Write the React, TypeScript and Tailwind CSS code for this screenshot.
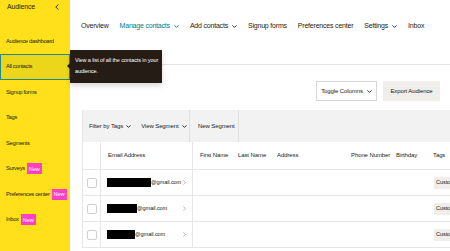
import React from "react";

const Caret = ({ className = "" }: { className?: string }) => (
  <svg width="5" height="3" viewBox="0 0 5 3" className={className}>
    <path d="M0.5 0.4 L2.5 2.4 L4.5 0.4" fill="none" stroke="currentColor" strokeWidth="0.9" />
  </svg>
);

const RightChev = () => (
  <svg width="3" height="5" viewBox="0 0 3 5" className="text-[#9a9a9a]">
    <path d="M0.4 0.4 L2.4 2.5 L0.4 4.6" fill="none" stroke="currentColor" strokeWidth="0.7" />
  </svg>
);

const NewBadge = () => (
  <span className="ml-[2px] inline-flex h-[11px] items-center bg-[#ff3fc6] px-[2px] text-[5.5px] tracking-normal text-white">New</span>
);

const sideItems: { label: string; active?: boolean; badge?: boolean }[] = [
  { label: "Audience dashboard" },
  { label: "All contacts", active: true },
  { label: "Signup forms" },
  { label: "Tags" },
  { label: "Segments" },
  { label: "Surveys", badge: true },
  { label: "Preferences center", badge: true },
  { label: "Inbox", badge: true },
];

const navItems: { label: string; caret?: boolean; active?: boolean }[] = [
  { label: "Overview" },
  { label: "Manage contacts", caret: true, active: true },
  { label: "Add contacts", caret: true },
  { label: "Signup forms" },
  { label: "Preferences center" },
  { label: "Settings", caret: true },
  { label: "Inbox" },
];

const rows = [44, 30, 28];

export default function App() {
  return (
    <div className="relative flex h-[251px] w-[450px] overflow-hidden bg-white font-['Liberation_Sans',Arial,sans-serif] text-[#241c15]">
      {/* Sidebar */}
      <aside className="flex w-[70px] shrink-0 flex-col bg-[#ffe01b]">
        <div className="flex h-[27.5px] items-start justify-between pl-[7px] pr-[11px] pt-[2px]">
          <span className="text-[7px] leading-[10px] tracking-[-0.15px]">Audience</span>
          <svg width="4" height="6" viewBox="0 0 4 6" className="mt-[2px]">
            <path d="M3.3 0.5 L0.8 3 L3.3 5.5" fill="none" stroke="#241c15" strokeWidth="0.9" />
          </svg>
        </div>
        <div className="h-[1px]" />
        {sideItems.map((it) =>
          it.active ? (
            <div
              key={it.label}
              className="flex h-[25.5px] items-center border border-[#1f8a88] bg-[#ecd61c] pl-[5px] text-[5.8px] tracking-[-0.3px] whitespace-nowrap"
            >
              {it.label}
            </div>
          ) : (
            <div key={it.label} className="flex h-[25.5px] items-center pl-[6px] text-[5.8px] tracking-[-0.3px] whitespace-nowrap">
              {it.label}
              {it.badge && <NewBadge />}
            </div>
          )
        )}
      </aside>

      {/* Main */}
      <main className="flex min-w-0 flex-1 flex-col overflow-hidden">
        <div className="h-[65px] shrink-0 border-b border-[#e4e4e4]">
          <nav className="flex h-[52px] items-center gap-[11px] pl-[11px] text-[7px] tracking-[-0.2px] whitespace-nowrap">
            {navItems.map((n) => (
              <span
                key={n.label}
                className={`flex items-center gap-[4px] ${n.active ? "text-[#007c89]" : "text-[#241c15]"}`}
              >
                {n.label}
                {n.caret && <Caret />}
              </span>
            ))}
          </nav>
        </div>

        <div className="mt-[16px] flex shrink-0 justify-end gap-[6px] pr-[10px] text-[6px] tracking-[-0.1px] whitespace-nowrap">
          <div className="flex h-[20px] w-[61px] items-center justify-center gap-[4px] border border-[#d6d6d6] bg-white">
            Toggle Columns
            <Caret />
          </div>
          <div className="flex h-[20px] w-[57px] items-center justify-center bg-[#efeeea]">Export Audience</div>
        </div>

        <div className="ml-[12px] mt-[9px] w-[420px] shrink-0 border-l border-[#e6e6e6] text-[6px] tracking-[-0.1px]">
          <div className="flex h-[32px] items-stretch bg-[#f2f2f2] whitespace-nowrap">
            <div className="flex w-[106px] items-center gap-[10px] pl-[6px]">
              <span className="flex items-center gap-[3px]">
                Filter by Tags <Caret />
              </span>
              <span className="flex items-center gap-[3px]">
                View Segment <Caret />
              </span>
            </div>
            <div className="flex w-[50px] items-center border-x border-[#e0e0e0] pl-[8px]">New Segment</div>
          </div>

          <div className="grid h-[28px] grid-cols-[18px_92px_38px_39px_74px_45px_37px_77px] items-stretch border-b border-[#e6e6e6] whitespace-nowrap">
            <div className="border-r border-[#e6e6e6]" />
            <div className="flex items-center border-r border-[#e6e6e6] pl-[7px]">Email Address</div>
            <div className="flex items-center pl-[7px]">First Name</div>
            <div className="flex items-center pl-[7px]">Last Name</div>
            <div className="flex items-center pl-[7px]">Address</div>
            <div className="flex items-center pl-[7px]">Phone Number</div>
            <div className="flex items-center pl-[7px]">Birthday</div>
            <div className="flex items-center pl-[7px]">Tags</div>
          </div>

          {rows.map((w, i) => (
            <div
              key={i}
              className="grid h-[26px] grid-cols-[18px_92px_38px_39px_74px_45px_37px_77px] items-stretch border-b border-[#e6e6e6] whitespace-nowrap"
            >
              <div className="flex items-center border-r border-[#e6e6e6] pl-[4px]">
                <div className="h-[10px] w-[10px] rounded-[2px] border border-[#cfcfcf] bg-white" />
              </div>
              <div className="flex items-center border-r border-[#e6e6e6] pl-[6px] pr-[6px]">
                <div className="h-[9px] bg-black" style={{ width: w }} />
                <span className="text-[5.6px] tracking-[-0.1px]">@gmail.com</span>
                <span className="ml-auto">
                  <RightChev />
                </span>
              </div>
              <div />
              <div />
              <div />
              <div />
              <div />
              <div className="flex items-center pl-[8px]">
                <span className="flex h-[12px] items-center bg-[#efeeea] px-[2px] text-[5.6px]">Custom</span>
              </div>
            </div>
          ))}
        </div>
      </main>

      {/* Tooltip */}
      <div className="absolute left-[70px] top-[50px] h-[33px] w-[92px] bg-[#241c15] px-[5px] py-[5px] text-[5.5px] leading-[11px] tracking-[-0.1px] whitespace-nowrap text-white shadow-[0_3px_5px_rgba(0,0,0,0.15)]">
        <div className="absolute left-[-3px] top-[13px] h-0 w-0 border-y-[3px] border-r-[3px] border-y-transparent border-r-[#241c15]" />
        View a list of all the contacts in your
        <br />
        audience.
      </div>
    </div>
  );
}
